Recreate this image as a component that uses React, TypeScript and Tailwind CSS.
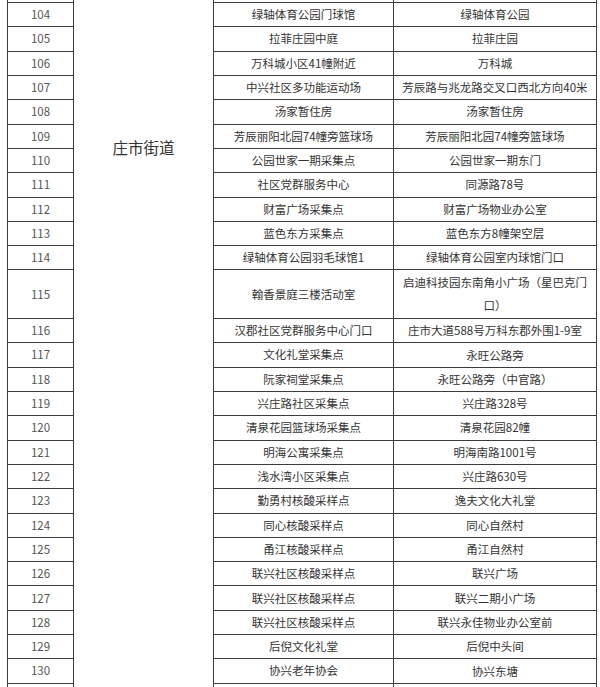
import React from 'react';

type Row = { no: number; site: string; addr: React.ReactNode; tall?: boolean; cut?: boolean };

const rows: Row[] = [
  { no: 103, site: '', addr: '', cut: true },
  { no: 104, site: '绿轴体育公园门球馆', addr: '绿轴体育公园' },
  { no: 105, site: '拉菲庄园中庭', addr: '拉菲庄园' },
  { no: 106, site: '万科城小区41幢附近', addr: '万科城' },
  { no: 107, site: '中兴社区多功能运动场', addr: '芳辰路与兆龙路交叉口西北方向40米' },
  { no: 108, site: '汤家暂住房', addr: '汤家暂住房' },
  { no: 109, site: '芳辰丽阳北园74幢旁篮球场', addr: '芳辰丽阳北园74幢旁篮球场' },
  { no: 110, site: '公园世家一期采集点', addr: '公园世家一期东门' },
  { no: 111, site: '社区党群服务中心', addr: '同源路78号' },
  { no: 112, site: '财富广场采集点', addr: '财富广场物业办公室' },
  { no: 113, site: '蓝色东方采集点', addr: '蓝色东方8幢架空层' },
  { no: 114, site: '绿轴体育公园羽毛球馆1', addr: '绿轴体育公园室内球馆门口' },
  {
    no: 115,
    site: '翰香景庭三楼活动室',
    addr: (
      <>
        启迪科技园东南角小广场（星巴克门
        <br />
        口）
      </>
    ),
    tall: true,
  },
  { no: 116, site: '汉郡社区党群服务中心门口', addr: '庄市大道588号万科东郡外围1-9室' },
  { no: 117, site: '文化礼堂采集点', addr: '永旺公路旁' },
  { no: 118, site: '阮家祠堂采集点', addr: '永旺公路旁（中官路）' },
  { no: 119, site: '兴庄路社区采集点', addr: '兴庄路328号' },
  { no: 120, site: '清泉花园篮球场采集点', addr: '清泉花园82幢' },
  { no: 121, site: '明海公寓采集点', addr: '明海南路1001号' },
  { no: 122, site: '浅水湾小区采集点', addr: '兴庄路630号' },
  { no: 123, site: '勤勇村核酸采样点', addr: '逸夫文化大礼堂' },
  { no: 124, site: '同心核酸采样点', addr: '同心自然村' },
  { no: 125, site: '甬江核酸采样点', addr: '甬江自然村' },
  { no: 126, site: '联兴社区核酸采样点', addr: '联兴广场' },
  { no: 127, site: '联兴社区核酸采样点', addr: '联兴二期小广场' },
  { no: 128, site: '联兴社区核酸采样点', addr: '联兴永佳物业办公室前' },
  { no: 129, site: '后倪文化礼堂', addr: '后倪中头间' },
  { no: 130, site: '协兴老年协会', addr: '协兴东塘' },
  { no: 131, site: '', addr: '', cut: true },
];

const cell = 'border border-[#3c3c3c] text-center align-middle p-0';

export default function App() {
  return (
    <div className="w-[600px] h-[687px] overflow-hidden bg-white font-['Noto_Sans_CJK_SC','Noto_Sans',sans-serif] text-[11.5px] text-[#333]">
      {/* the sheet continues above and below; rows 103 and 131 only show their edges */}
      <table className="ml-[7px] -mt-[22.3px] w-[589px] table-fixed border-collapse">
        <colgroup>
          <col className="w-[66px]" />
          <col className="w-[140px]" />
          <col className="w-[180px]" />
          <col className="w-[203px]" />
        </colgroup>
        <tbody>
          {rows.map((r, i) => (
            <tr key={r.no} className={r.tall ? 'h-[48.6px]' : 'h-[24.32px]'}>
              <td className={`${cell} text-[#555]`}>{r.cut ? '' : r.no}</td>
              {i === 0 && (
                <td rowSpan={rows.length} className={`${cell} align-top pt-[157px] text-[15.5px] text-[#333]`}>
                  庄市街道
                </td>
              )}
              <td className={cell}>{r.site}</td>
              <td className={`${cell} leading-[23px]`}>{r.addr}</td>
            </tr>
          ))}
        </tbody>
      </table>
    </div>
  );
}
